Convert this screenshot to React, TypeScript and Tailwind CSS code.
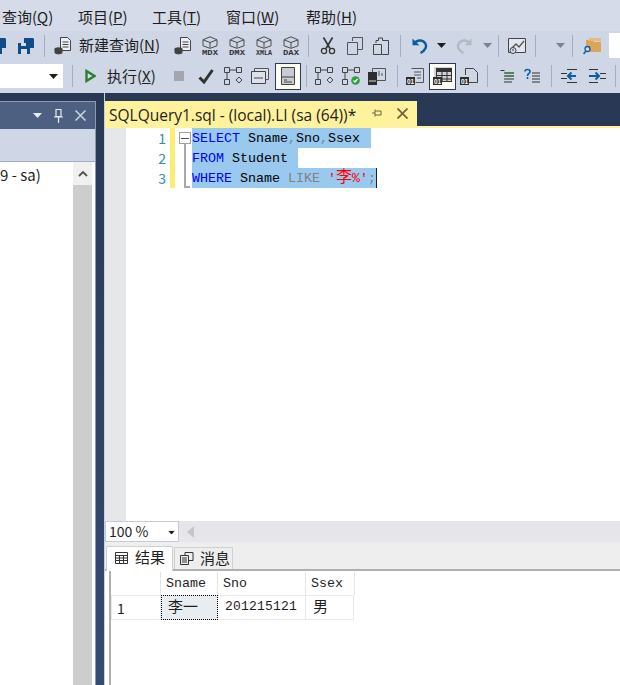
import React from "react";

const ui = "font-['Noto_Sans_CJK_SC','Noto_Sans',sans-serif]";
const mono = "font-['Liberation_Mono','Noto_Sans_CJK_SC',monospace]";

type IP = { className?: string };

const Sep = ({ className = "" }: IP) => <div className={`w-px h-[22px] bg-[#a4adc1] shrink-0 ${className}`} />;
const Caret = ({ className = "", color = "#1e1e1e" }: IP & { color?: string }) => (
  <svg width="9" height="5" viewBox="0 0 9 5" className={`shrink-0 ${className}`}><path d="M0 0h9L4.5 5z" fill={color} /></svg>
);
const Ico = ({ w = 18, h = 18, className = "", children }: IP & { w?: number; h?: number; children: React.ReactNode }) => (
  <svg width={w} height={h} viewBox={`0 0 ${w} ${h}`} className={`shrink-0 ${className}`} fill="none">{children}</svg>
);

const Save = ({ className = "" }: IP) => (
  <Ico w={18} h={18} className={className}>
    <path d="M7 1h9l1 1v9h-4V9H7z" fill="#0f4c8a" />
    <path d="M1 6h10l2 2v9H1z" fill="#0f4c8a" />
    <path d="M4 6h5v3H4z" fill="#d6dbe9" />
    <path d="M4 12h6v5H4z" fill="#d6dbe9" />
  </Ico>
);
const NewQ = ({ className = "" }: IP) => (
  <Ico w={19} h={19} className={className}>
    <path d="M6.5 1.5h7l3 3v10h-10z" fill="#eef0f5" stroke="#424242" />
    <path d="M8.500 6h6M8.500 8.500h6M8.500 11h6" stroke="#424242" />
    <ellipse cx="4.500" cy="13" rx="4" ry="1.800" fill="#424242" />
    <path d="M.5 13v3.500c0 1 1.800 1.800 4 1.800s4-.8 4-1.800V13z" fill="#424242" />
  </Ico>
);
const Cube = ({ label, className = "", w = 18 }: IP & { label: string; w?: number }) => (
  <svg width={w} height={20} viewBox={`0 0 ${w} 20`} className={`shrink-0 ${className}`} fill="none">
    <path d={`M${w / 2} .8l7 3v6l-7 2.500-7-2.500v-6zM${w / 2 - 7} 3.800l7 2.700 7-2.700M${w / 2} 6.500v5`} stroke="#4a4a4a" />
    <text x={w / 2} y="19" textAnchor="middle" fontSize="7.500" fontWeight="700" textLength={w - 2} lengthAdjust="spacingAndGlyphs" fontFamily="'Liberation Mono',monospace" fill="#333">{label}</text>
  </svg>
);
const Scissors = ({ className = "" }: IP) => (
  <Ico w={16} h={18} className={className}>
    <path d="M3.500 .5l6.500 11M12.500 .5L6 11.500" stroke="#333" strokeWidth="1.600" />
    <circle cx="4" cy="14" r="2.600" stroke="#333" strokeWidth="1.300" />
    <circle cx="12" cy="14" r="2.600" stroke="#333" strokeWidth="1.300" />
  </Ico>
);
const Copy = ({ className = "" }: IP) => (
  <Ico w={16} h={18} className={className}>
    <path d="M5.500 4V.5h10v12H11" stroke="#555" />
    <path d="M.5 5.500h10v12H.5z" stroke="#555" />
  </Ico>
);
const Paste = ({ className = "" }: IP) => (
  <Ico w={16} h={18} className={className}>
    <path d="M.5 7.500h8v10h-8z" stroke="#444" />
    <path d="M3 6V3.500h2.500V1h4v2.500h6v14H9" stroke="#444" />
  </Ico>
);
const Undo = ({ className = "", color = "#0e5c9e" }: IP & { color?: string }) => (
  <Ico w={17} h={18} className={className}>
    <path d="M1.500 1.500v6.800h6.800" fill={color} />
    <path d="M3 6.500c3-3.800 8.500-4 11 -.5 2.300 3.200.5 7.500-4.500 10" stroke={color} strokeWidth="2.400" />
  </Ico>
);
const Redo = ({ className = "" }: IP) => (
  <Ico w={17} h={18} className={`-scale-x-100 ${className}`}>
    <path d="M1.500 1.500v6.800h6.800" fill="#b4b8c0" />
    <path d="M3 6.500c3-3.800 8.500-4 11 -.5 2.300 3.200.5 7.500-4.500 10" stroke="#b4b8c0" strokeWidth="2.400" />
  </Ico>
);
const Monitor = ({ className = "" }: IP) => (
  <Ico w={18} h={18} className={className}>
    <path d="M.5 1.500h17v14H.5z" stroke="#444" fill="#e3e6ee" />
    <path d="M3 12l5-5 3 3 5-6" stroke="#555" strokeWidth="1.300" />
    <circle cx="5" cy="13.500" r="3" fill="#d6dbe9" stroke="#444" />
    <path d="M5 12v2" stroke="#444" />
  </Ico>
);
const Folder = ({ className = "" }: IP) => (
  <Ico w={18} h={18} className={className}>
    <path d="M3 3h7l1 2h7v10H3z" fill="#d9a55a" />
    <path d="M6 1h12v3H6z" fill="#e3bb7a" />
    <circle cx="4.500" cy="12" r="2.500" fill="#d6dbe9" stroke="#0e5c9e" strokeWidth="1.300" />
    <path d="M3 14l-2.500 3" stroke="#0e5c9e" strokeWidth="1.500" />
  </Ico>
);
const Play = ({ className = "" }: IP) => (
  <Ico w={11} h={14} className={className}>
    <path d="M1.500 2l8 5-8 5z" stroke="#2f7d32" strokeWidth="2.400" fill="#d6dbe9" />
  </Ico>
);
const Check = ({ className = "" }: IP) => (
  <Ico w={16} h={15} className={className}>
    <path d="M1.500 8.500l4.500 4.500L14.500 1" stroke="#333" strokeWidth="3" />
  </Ico>
);
const Plan = ({ className = "", ok = false }: IP & { ok?: boolean }) => (
  <Ico w={18} h={18} className={className}>
    <path d="M.5 .5h5v5h-5zM12.500 .5h5v5h-5zM.5 12.500h5v5h-5z" stroke="#444" />
    <path d="M6 3h6M3 6v6" stroke="#444" />
    {ok ? (
      <>
        <circle cx="13.500" cy="13.500" r="4.300" fill="#2f9e44" />
        <path d="M11.500 13.500l1.500 1.500 2.500-3" stroke="#fff" strokeWidth="1.200" />
      </>
    ) : (
      <path d="M15 10l3 3-3 3-3-3z" stroke="#444" />
    )}
  </Ico>
);
const Panes = ({ className = "" }: IP) => (
  <Ico w={18} h={16} className={className}>
    <path d="M3.500 .5h14v11h-14z" stroke="#555" fill="#dde1ea" />
    <path d="M.5 3.500h14v12H.5z" stroke="#444" fill="#dde1ea" />
    <path d="M3 10h9" stroke="#444" />
  </Ico>
);
const Layout = ({ className = "" }: IP) => (
  <Ico w={14} h={18} className={className}>
    <path d="M.5 .5h13v17H.5z" stroke="#444" fill="#c8cbd1" />
    <path d="M1 10h12" stroke="#444" />
    <path d="M3 13h3M3 15h8" stroke="#444" />
  </Ico>
);
const Server = ({ className = "" }: IP) => (
  <Ico w={18} h={18} className={className}>
    <path d="M4.500 1.500h13v12h-13z" stroke="#555" />
    <path d="M11 9V4M14 9V6" stroke="#555" />
    <path d="M0 5h9v13H0z" fill="#2e2e2e" />
    <path d="M1 14h7" stroke="#ddd" />
  </Ico>
);
const Badge01 = ({ x = 0, y = 10 }: { x?: number; y?: number }) => (
  <>
    <rect x={x} y={y} width="9" height="8" fill="#2e2e2e" />
    <text x={x + 4.500} y={y + 6.500} textAnchor="middle" fontSize="6.500" fontWeight="700" fontFamily="'Liberation Sans',sans-serif" fill="#fff">01</text>
  </>
);
const ToText = ({ className = "" }: IP) => (
  <Ico w={18} h={18} className={className}>
    <path d="M5.500 1.500h12v14h-8" stroke="#555" />
    <path d="M8 5h7M8 8h7M11 11h4" stroke="#555" />
    <Badge01 />
  </Ico>
);
const ToGrid = ({ className = "" }: IP) => (
  <Ico w={19} h={18} className={className}>
    <path d="M1 0h18v15H1z" fill="#d1d3d9" />
    <path d="M3 1h16v4H3z" fill="#333" />
    <path d="M3.500 5v10M9 1v14M14 1v14M3 8.500h16M3 12h16M18.500 1v14M3 14.500h16" stroke="#333" />
    <Badge01 />
  </Ico>
);
const ToFile = ({ className = "" }: IP) => (
  <Ico w={18} h={18} className={className}>
    <path d="M5.500 8V1.500h8l4 4v10H9" stroke="#444" />
    <Badge01 />
  </Ico>
);
const Lines = ({ className = "" }: IP) => (
  <Ico w={14} h={14} className={className}>
    <path d="M.5 1.500h4M4 4h10M4 7h10M4 10h10M4 13h8" stroke="#333" />
    <path d="M5 4h9M5 7h9" stroke="#2f7d32" />
  </Ico>
);
const QLines = ({ className = "" }: IP) => (
  <Ico w={16} h={16} className={className}>
    <path d="M1 3.500C1 .8 6 .8 6 3.500 6 5.500 3.500 5.500 3.500 8" stroke="#0e5c9e" strokeWidth="1.600" />
    <path d="M3.500 9v2" stroke="#0e5c9e" strokeWidth="1.600" />
    <path d="M8 5h8M8 8h8M8 11h8M8 14h8" stroke="#333" />
  </Ico>
);
const OutL = ({ className = "" }: IP) => (
  <Ico w={20} h={16} className={className}>
    <path d="M6 1.500h10M6 14.500h10M0 5.500h6M0 10.500h6" stroke="#333" />
    <path d="M15 8H7.500M10.500 4.500L7 8l3.500 3.500" stroke="#0e5c9e" strokeWidth="2" />
  </Ico>
);
const OutR = ({ className = "" }: IP) => (
  <Ico w={18} h={16} className={className}>
    <path d="M1 1.500h9M1 14.500h9M12 5.500h6M12 10.500h6" stroke="#333" />
    <path d="M1 8h9M7.500 4.500L11 8l-3.500 3.500" stroke="#0e5c9e" strokeWidth="2" />
  </Ico>
);
const Cross = ({ size = 11, color = "#fff", width = 1.500 }: { size?: number; color?: string; width?: number }) => (
  <svg width={size} height={size} viewBox="0 0 11 11" className="shrink-0"><path d="M.5 .5l10 10M10.500 .5l-10 10" stroke={color} strokeWidth={width} /></svg>
);

const Menu = () => (
  <div className={`h-[31px] bg-[#d6dbe9] flex items-center pl-[2px] pt-[3px] text-[15px] text-[#1e1e1e] shrink-0 ${ui}`}>
    <span className="w-[76px]">查询(<u>Q</u>)</span>
    <span className="w-[74px]">项目(<u>P</u>)</span>
    <span className="w-[74px]">工具(<u>T</u>)</span>
    <span className="w-[80px]">窗口(<u>W</u>)</span>
    <span>帮助(<u>H</u>)</span>
  </div>
);

const Toolbar1 = () => (
  <div className={`h-[29px] bg-[#cfd6e5] flex items-center text-[15px] text-[#1e1e1e] overflow-hidden shrink-0 ${ui}`}>
    <Save className="ml-[-11px]" />
    <Save className="ml-[10px]" />
    <Sep className="ml-[9px]" />
    <NewQ className="ml-[9px]" />
    <span className="ml-[6px] w-[81px] whitespace-nowrap">新建查询(<u>N</u>)</span>
    <NewQ className="ml-[14px]" />
    <Cube label="MDX" className="ml-[8px]" />
    <Cube label="DMX" className="ml-[9px]" />
    <Cube label="XMLA" className="ml-[9px]" />
    <Cube label="DAX" className="ml-[9px]" />
    <Sep className="ml-[8px]" />
    <Scissors className="ml-[11px]" />
    <Copy className="ml-[11px]" />
    <Paste className="ml-[10px]" />
    <Sep className="ml-[11px]" />
    <Undo className="ml-[10px]" />
    <Caret className="ml-[9px]" />
    <Redo className="ml-[10px]" />
    <Caret color="#7d818a" className="ml-[10px]" />
    <Sep className="ml-[6px]" />
    <Monitor className="ml-[9px]" />
    <Sep className="ml-[9px]" />
    <Caret color="#7d818a" className="ml-[20px]" />
    <Sep className="ml-[7px]" />
    <Folder className="ml-[10px]" />
    <div className="ml-[8px] w-[20px] h-[25px] bg-white shrink-0" />
  </div>
);

const Toolbar2 = () => (
  <div className={`h-[33px] pb-[1px] bg-[#cfd6e5] flex items-center text-[15px] text-[#1e1e1e] overflow-hidden shrink-0 ${ui}`}>
    <div className="w-[63px] h-[24px] bg-white flex items-center justify-end pr-[5px] shrink-0"><Caret /></div>
    <Sep className="ml-[9px]" />
    <Play className="ml-[12px]" />
    <span className="ml-[11px] w-[50px] whitespace-nowrap shrink-0">执行(<u>X</u>)</span>
    <div className="ml-[17px] w-[10px] h-[10px] bg-[#a3a6ad] shrink-0" />
    <Check className="ml-[14px]" />
    <Plan className="ml-[10px]" />
    <Panes className="ml-[9px]" />
    <div className="ml-[6px] w-[26px] h-[27px] border border-[#2a3a56] bg-[#fdfcf3] flex items-center justify-center shrink-0"><Layout /></div>
    <Sep className="ml-[5px]" />
    <Plan className="ml-[8px]" />
    <Plan ok className="ml-[9px]" />
    <Server className="ml-[8px]" />
    <Sep className="ml-[11px]" />
    <ToText className="ml-[8px]" />
    <div className="ml-[5px] w-[27px] h-[27px] border border-[#2a3a56] bg-[#fdfcf3] flex items-center justify-center shrink-0"><ToGrid /></div>
    <ToFile className="ml-[4px]" />
    <Sep className="ml-[9px]" />
    <Lines className="ml-[12px]" />
    <QLines className="ml-[10px]" />
    <Sep className="ml-[11px]" />
    <OutL className="ml-[9px]" />
    <OutR className="ml-[7px]" />
    <Sep className="ml-[9px]" />
  </div>
);

const LeftPanel = () => (
  <div className="w-[96px] mt-[8px] flex flex-col shrink-0 border-r border-[#8c9ab3] border-t">
    <div className="h-[27px] bg-[#4d6082] flex items-center shrink-0">
      <Caret color="#e8ebf2" className="ml-[33px]" />
      <svg width="9" height="14" viewBox="0 0 9 14" className="ml-[12px] shrink-0"><path d="M2 .5h5v7H2zM0 8h9M4.500 8v6" stroke="#e8ebf2" strokeWidth="1.200" fill="none" /></svg>
      <span className="ml-[12px]"><Cross size={11} color="#cfd6e5" /></span>
    </div>
    <div className="h-[32px] bg-[#cfd6e5] shrink-0" />
    <div className={`flex-1 bg-white border-t border-[#a4adc1] flex text-[15px] text-[#1e1e1e] overflow-hidden ${ui}`}>
      <div className="w-[73px] overflow-hidden whitespace-nowrap leading-[26px] shrink-0">9 - sa)</div>
      <div className="w-[19px] flex flex-col shrink-0">
        <div className="h-[23px] bg-[#f0f0f0] flex items-center justify-center shrink-0">
          <svg width="10" height="6" viewBox="0 0 10 6"><path d="M1 5l4-4 4 4" stroke="#505050" strokeWidth="1.800" fill="none" /></svg>
        </div>
        <div className="flex-1 bg-[#cdcdcd]" />
      </div>
    </div>
  </div>
);

const Sel = ({ children, className = "" }: { children: React.ReactNode; className?: string }) => (
  <span className={`bg-[#99c9ef] inline-block h-[20px] leading-[21px] align-top ${className}`}>{children}</span>
);

const Code = () => (
  <div className="flex-1 min-h-0 flex bg-white overflow-hidden">
    <div className="w-[21px] bg-[#e6e7e8] shrink-0" />
    <div className={`w-[40px] text-right text-[14px] leading-[20px] text-[#2b91af] shrink-0 ${ui}`}>
      <div className="h-[20px]">1</div>
      <div className="h-[20px]">2</div>
      <div className="h-[20px]">3</div>
    </div>
    <div className="ml-[4px] w-[5px] h-[60px] bg-[#fdee73] shrink-0" />
    <div className="relative w-[17px] shrink-0">
      <div className="absolute left-[4px] top-[4px] w-[12px] h-[12px] border border-[#a0a0a0] bg-white flex items-center justify-center"><div className="w-[8px] h-px bg-[#555]" /></div>
      <div className="absolute left-[9px] top-[16px] w-[6px] h-[44px] border-l-2 border-b-2 border-[#a8a8a8]" />
    </div>
    <div className={`text-[13.33px] leading-[20px] text-black whitespace-pre ${mono}`}>
      <div className="h-[20px]"><Sel className="w-[179px]"><span className="text-[#0000ff]">SELECT</span> Sname<span className="text-[#808080]">,</span>Sno<span className="text-[#808080]">,</span>Ssex</Sel></div>
      <div className="h-[20px]"><Sel className="w-[106px]"><span className="text-[#0000ff]">FROM</span> Student</Sel></div>
      <div className="h-[20px] flex items-start">
        <Sel className="w-[184px]"><span className="text-[#0000ff]">WHERE</span> Sname <span className="text-[#808080]">LIKE</span> <span className="text-[#ff0000]">'<span className="text-[16px] leading-[0] font-['Noto_Sans_CJK_SC',sans-serif]">李</span>%'</span><span className="text-[#808080]">;</span></Sel>
        <div className="w-px h-[20px] bg-[#1e1e1e]" />
      </div>
    </div>
  </div>
);

const Results = () => (
  <div className={`flex flex-col shrink-0 ${ui}`}>
    <div className="h-[21px] bg-[#e6e6ea] flex items-center">
      <div className="w-[74px] h-[21px] bg-white border border-[#c5cbd9] flex items-center text-[14px] text-[#1e1e1e] pl-[3px] shrink-0 relative">
        100 %
        <Caret className="absolute right-[2px] top-[8px] scale-75" />
      </div>
      <svg width="7" height="12" viewBox="0 0 7 12" className="ml-[8px]"><path d="M7 0v12L0 6z" fill="#c4c6cc" /></svg>
    </div>
    <div className="h-[29px] bg-[#eeeeee] flex items-end border-b-2 border-[#b0b0b0] text-[15px] text-[#1e1e1e]">
      <div className="ml-[1px] w-[67px] h-[25px] mb-[-2px] pb-[3px] bg-white border border-b-0 border-[#d0d0d0] flex items-center pl-[8px] gap-[7px] shrink-0">
        <svg width="13" height="12" viewBox="0 0 13 12"><path d="M.5 .5h12v11H.5zM.5 3.500h12M.5 6h12M.5 8.500h12M4.500 3.500v8M8.500 3.500v8" stroke="#333" fill="none" /></svg>
        <span>结果</span>
      </div>
      <div className="ml-[1px] w-[59px] h-[22px] bg-[#eeeeee] border border-b-0 border-[#d0d0d0] flex items-center pl-[5px] gap-[6px] shrink-0">
        <svg width="14" height="13" viewBox="0 0 14 13"><path d="M.5 3.500h8v9h-8zM5 3V.5h8v8h-4M2 6h5M2 8h5M2 10h5" stroke="#333" fill="none" /></svg>
        <span>消息</span>
      </div>
    </div>
  </div>
);

const Grid = () => (
  <div className="h-[114px] bg-white pl-[4px] shrink-0 overflow-hidden">
    <div className="h-full border-l-2 border-[#b0b0b0] pt-[1px]">
      <div className={`flex h-[23px] text-[13.33px] text-[#1e1e1e] ${mono}`}>
        <div className="w-[50px] border-r border-[#e4e4e4] shrink-0" />
        <div className="w-[57px] border-r border-[#e4e4e4] pl-[5px] leading-[24px] shrink-0">Sname</div>
        <div className="w-[88px] border-r border-[#e4e4e4] pl-[5px] leading-[24px] shrink-0">Sno</div>
        <div className="w-[49px] border-r border-[#e4e4e4] pl-[5px] leading-[24px] shrink-0">Ssex</div>
      </div>
      <div className={`flex h-[25px] text-[14px] text-[#1e1e1e] border-y border-[#e9e9e9] w-[243px] ${ui}`}>
        <div className="w-[50px] border-x border-[#e9e9e9] pl-[5px] leading-[24px] shrink-0">1</div>
        <div className="w-[57px] h-[25px] -mt-px border border-dotted border-black bg-[#e8edf1] pl-[6px] leading-[20px] text-[15px] shrink-0">李一</div>
        <div className="w-[88px] border-r border-[#e9e9e9] pl-[7px] leading-[22px] text-[13px] tracking-[.2px] shrink-0 font-['Liberation_Mono',monospace]">201215121</div>
        <div className="w-[48px] border-r border-[#e9e9e9] pl-[7px] leading-[20px] text-[15px] shrink-0">男</div>
      </div>
    </div>
  </div>
);

const TabBar = () => (
  <div className="h-[35px] pt-[8px] shrink-0 flex flex-col bg-[#293955]">
    <div className="w-[312px] h-[25px] bg-[#fff29d] flex items-center text-[15.5px] text-[#1e1e1e] shrink-0 font-['Open_Sans',sans-serif]">
      <span className="ml-[4px] pt-[4px] w-[257px] whitespace-nowrap shrink-0">SQLQuery1.sql - (local).LI (sa (64))*</span>
      <svg width="11" height="9" viewBox="0 0 11 9" className="ml-[6px] shrink-0"><path d="M3 .5v7M3 2h6v4H3M0 4h3" stroke="#75633d" fill="none" /></svg>
      <span className="ml-[14px]"><Cross size={11} color="#75633d" width={1.800} /></span>
    </div>
    <div className="h-[2px] bg-[#fff29d] w-[516px] shrink-0" />
  </div>
);

export default function App() {
  return (
    <div className="w-[620px] h-[685px] overflow-hidden flex flex-col bg-[#293955]">
      <Menu />
      <Toolbar1 />
      <Toolbar2 />
      <div className="flex-1 min-h-0 flex bg-linear-to-b from-[#293955] to-[#364b73]">
        <LeftPanel />
        <div className="w-[8px] shrink-0" />
        <div className="w-[516px] flex flex-col shrink-0 border-l border-[#c9d0de]">
          <TabBar />
          <Code />
          <Results />
          <Grid />
        </div>
      </div>
    </div>
  );
}
